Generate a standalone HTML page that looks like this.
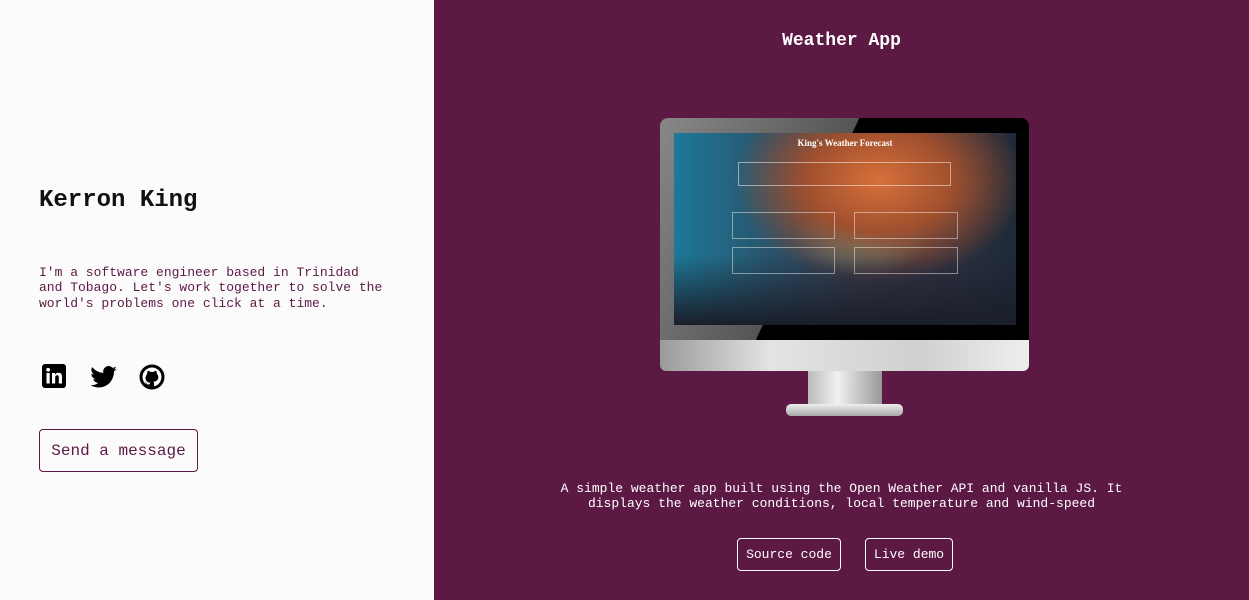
<!DOCTYPE html>
<html><head><style>
*{margin:0;padding:0;box-sizing:border-box}
body{width:1249px;height:600px;overflow:hidden;font-family:"Liberation Mono",monospace;background:#fcfbfc;position:relative}
.left{position:absolute;left:0;top:0;width:434px;height:600px;background:#fcfbfc}
h1{position:absolute;left:39px;top:187px;font-size:24px;font-weight:bold;color:#111}
.p{position:absolute;left:39px;top:265px;font-size:13px;line-height:15.3px;color:#5c1944;width:348px}
.ic{position:absolute;top:364px}
.btn{position:absolute;border:1px solid #5c1944;border-radius:4px;color:#5c1944;font-size:16px;display:flex;align-items:center;justify-content:center}
.right{position:absolute;left:434px;top:0;width:815px;height:600px;background:#5c1944;color:#fff}
.t{position:absolute;left:0;width:815px;text-align:center;top:31px;font-size:18px;font-weight:bold}
.d{position:absolute;left:0;width:815px;text-align:center;top:481px;font-size:13px;line-height:15.3px}
.b2{position:absolute;top:538px;height:33px;border:1px solid #fff;border-radius:4px;font-size:13px;display:flex;align-items:center;justify-content:center}
</style></head><body>
<div class="left">
<h1>Kerron King</h1>
<div class="p">I'm a software engineer based in Trinidad and Tobago. Let's work together to solve the world's problems one click at a time.</div>
<svg class="ic" style="left:42px" width="24" height="24" viewBox="0 0 24 24"><rect x="0" y="0" width="24" height="24" rx="3" fill="#000"/><rect x="4.5" y="9" width="3.2" height="10.5" fill="#fff"/><circle cx="6.1" cy="5.8" r="1.9" fill="#fff"/><path d="M10 9h3v1.5c.6-1 1.8-1.8 3.5-1.8 2.6 0 3.5 1.6 3.5 4.3v6.5h-3.2v-5.8c0-1.4-.3-2.4-1.700-2.4s-1.9 1-1.9 2.4v5.8H10z" fill="#fff"/></svg>
<svg class="ic" style="left:90px;top:366px" width="27" height="22" viewBox="0 0 24 20"><path d="M24 2.4c-.9.4-1.8.6-2.8.8 1-.6 1.8-1.6 2.2-2.7-1 .6-2 1-3.1 1.2A4.9 4.9 0 0 0 11.9 6.2 14 14 0 0 1 1.7 1 4.9 4.9 0 0 0 3.2 7.6c-.8 0-1.6-.3-2.2-.6 0 2.4 1.7 4.4 3.9 4.8-.7.2-1.5.2-2.2.1.6 2 2.4 3.4 4.6 3.4A9.9 9.9 0 0 1 0 17.3 14 14 0 0 0 7.5 19.5c9.1 0 14-7.5 14-14v-.6c1-.7 1.8-1.6 2.5-2.5z" fill="#000"/></svg>
<svg class="ic" style="left:139px" width="26" height="26" viewBox="0 0 26 26">
<circle cx="13" cy="13" r="11" fill="none" stroke="#000" stroke-width="3"/>
<path d="M8 10c0-2 1-3 1-3s1.5 0 3 1h2c1.5-1 3-1 3-1s1 1 1 3c1 1 1.3 2 1.3 3 0 3.5-2.5 4.5-5 4.8.6.5.8 1.2.8 2v4.5h-4.2v-2.5c-2.5.5-3.5-.5-4-2-.3-.8-1-1.2-1.5-1.5 1 0 1.8.6 2.3 1.4.6.8 1.6 1 3 .6.1-.8.4-1.3.8-1.5-2.5-.3-5-1.3-5-4.8 0-1 .3-2 1-3z" fill="#000"/>
</svg>
<div class="btn" style="left:39px;top:429px;width:159px;height:43px">Send a message</div>
</div>
<div class="right">
<div class="t">Weather App</div>
<div style="position:absolute;left:226px;top:118px;width:369px;height:224px;border-radius:8px 8px 0 0;background:linear-gradient(115deg,#888 0,#555 42%,#000 42.2%,#000 100%)"></div>
<div style="position:absolute;left:240px;top:133px;width:342px;height:192px;background:radial-gradient(ellipse at 60% 25%,#d8703a 0,#a0502e 25%,transparent 50%),radial-gradient(ellipse at 55% 55%,#3aa0a0 0,transparent 25%),linear-gradient(90deg,#1c7a98 0,#2a5068 30%,#3a3848 55%,#2e3040 80%,#1e2a38 100%);overflow:hidden">
<div style="position:absolute;left:0;right:0;bottom:0;height:70px;background:linear-gradient(180deg,transparent,#1a1e2a)"></div>
<div style="position:absolute;left:0;width:342px;top:5px;text-align:center;font:bold 9px 'Liberation Serif',serif;color:#fff">King's Weather Forecast</div>
<div style="position:absolute;left:64px;top:29px;width:213px;height:24px;border:1px solid rgba(255,255,255,.5)"></div>
<div style="position:absolute;left:58px;top:79px;width:103px;height:27px;border:1px solid rgba(255,255,255,.45)"></div>
<div style="position:absolute;left:180px;top:79px;width:104px;height:27px;border:1px solid rgba(255,255,255,.45)"></div>
<div style="position:absolute;left:58px;top:114px;width:103px;height:27px;border:1px solid rgba(255,255,255,.45)"></div>
<div style="position:absolute;left:180px;top:114px;width:104px;height:27px;border:1px solid rgba(255,255,255,.45)"></div>
</div>
<div style="position:absolute;left:226px;top:340px;width:369px;height:31px;border-radius:0 0 6px 6px;background:linear-gradient(90deg,#9a9a9a,#e4e4e4 30%,#d0d0d0 70%,#eee)"></div>
<div style="position:absolute;left:374px;top:371px;width:74px;height:35px;background:linear-gradient(90deg,#bbb,#f0f0f0 40%,#999)"></div>
<div style="position:absolute;left:352px;top:404px;width:117px;height:12px;border-radius:5px;background:linear-gradient(180deg,#eee,#aaa)"></div>
<div class="d">A simple weather app built using the Open Weather API and vanilla JS. It<br>displays the weather conditions, local temperature and wind-speed</div>
<div class="b2" style="left:303px;width:104px">Source code</div>
<div class="b2" style="left:431px;width:88px">Live demo</div>
</div>
</body></html>
